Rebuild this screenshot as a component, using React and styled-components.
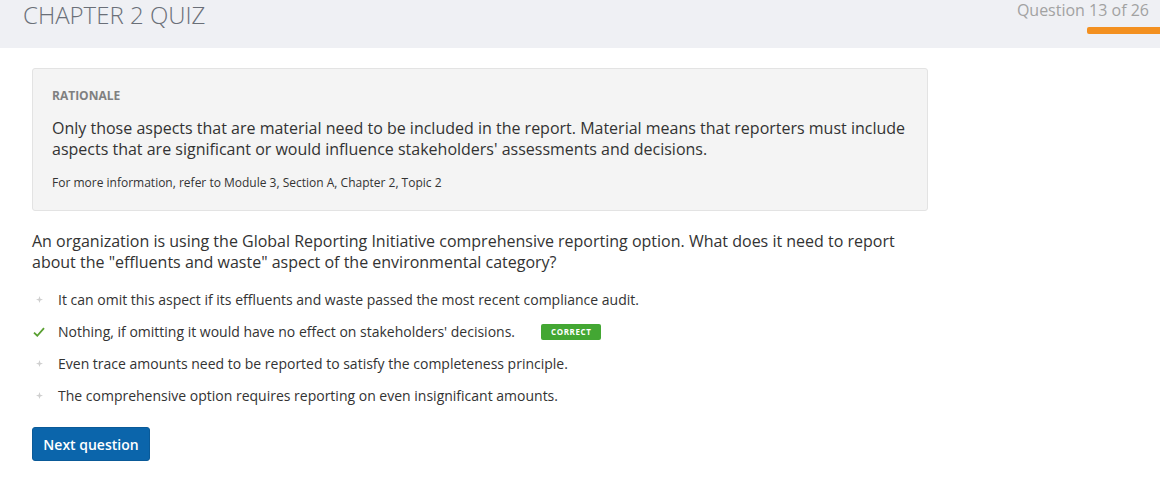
import styled, { createGlobalStyle } from "styled-components";

const GlobalStyle = createGlobalStyle`
  body {
    margin: 0;
    background: #ffffff;
    font-family: "Open Sans", "Liberation Sans", sans-serif;
    color: #333;
  }
`;

const options = [
  { text: "It can omit this aspect if its effluents and waste passed the most recent compliance audit." },
  { text: "Nothing, if omitting it would have no effect on stakeholders' decisions.", correct: true },
  { text: "Even trace amounts need to be reported to satisfy the completeness principle." },
  { text: "The comprehensive option requires reporting on even insignificant amounts." },
];

export default function App() {
  return (
    <>
      <GlobalStyle />
      <Page>
        <Header>
          <Title>CHAPTER 2 QUIZ</Title>
          <Progress>
            <ProgressText>Question 13 of 26</ProgressText>
            <ProgressBar />
          </Progress>
        </Header>

        <Content>
          <RationaleBox>
            <RationaleLabel>RATIONALE</RationaleLabel>
            <RationaleBody>
              Only those aspects that are material need to be included in the report. Material means that reporters must include
              aspects that are significant or would influence stakeholders' assessments and decisions.
            </RationaleBody>
            <RationaleRef>For more information, refer to Module 3, Section A, Chapter 2, Topic 2</RationaleRef>
          </RationaleBox>

          <QuestionText>
            An organization is using the Global Reporting Initiative comprehensive reporting option. What does it need to report
            about the "effluents and waste" aspect of the environmental category?
          </QuestionText>

          <OptionList>
            {options.map((o) => (
              <Option key={o.text}>
                <Marker>
                  {o.correct ? (
                    <svg width="12" height="10" viewBox="0 0 13 11">
                      <path d="M1 6.2 L4.6 9.6 L12 1.2" fill="none" stroke="#5aa032" strokeWidth="2" />
                    </svg>
                  ) : (
                    <svg width="7" height="7" viewBox="0 0 8 8">
                      <path d="M4 0 L5 3 L8 4 L5 5 L4 8 L3 5 L0 4 L3 3 Z" fill="#cfcfcf" />
                    </svg>
                  )}
                </Marker>
                <OptionText>{o.text}</OptionText>
                {o.correct && <Badge>CORRECT</Badge>}
              </Option>
            ))}
          </OptionList>

          <NextButton>Next question</NextButton>
        </Content>
      </Page>
    </>
  );
}

const Page = styled.div`
  width: 1160px;
  height: 479px;
  overflow: hidden;
`;

const Header = styled.div`
  height: 48px;
  background: #eff0f4;
  display: flex;
  justify-content: space-between;
  align-items: flex-start;
`;

const Title = styled.h1`
  margin: 0;
  padding: 0 0 0 23px;
  font-size: 24px;
  font-weight: 300;
  line-height: 30px;
  color: #6a6f78;
`;

const Progress = styled.div`
  display: flex;
  flex-direction: column;
  align-items: flex-end;
  padding-top: 1px;
`;

const ProgressText = styled.div`
  font-size: 16px;
  line-height: 18px;
  color: #a2a2a2;
  padding-right: 11px;
`;

const ProgressBar = styled.div`
  width: 73px;
  height: 7px;
  margin-top: 8px;
  background: #f39020;
  border-top-left-radius: 2px;
  border-bottom-left-radius: 2px;
`;

const Content = styled.div`
  padding: 20px 0 0 32px;
`;

const RationaleBox = styled.div`
  width: 896px;
  box-sizing: border-box;
  background: #f4f4f4;
  border: 1px solid #e3e3e3;
  border-radius: 3px;
  padding: 19px 20px 19px 19px;
`;

const RationaleLabel = styled.div`
  font-size: 12px;
  font-weight: 700;
  color: #808080;
  line-height: 16px;
`;

const RationaleBody = styled.p`
  margin: 14px 0 0;
  font-size: 16px;
  line-height: 21px;
  color: #333;
`;

const RationaleRef = styled.p`
  margin: 15px 0 0;
  font-size: 12px;
  line-height: 16px;
  color: #333;
`;

const QuestionText = styled.p`
  margin: 20px 0 0;
  width: 880px;
  font-size: 16px;
  line-height: 21px;
  color: #333;
`;

const OptionList = styled.ul`
  list-style: none;
  margin: 17px 0 0;
  padding: 0;
  display: flex;
  flex-direction: column;
  gap: 13px;
`;

const Option = styled.li`
  display: flex;
  align-items: center;
  height: 19px;
`;

const Marker = styled.span`
  width: 26px;
  display: flex;
  justify-content: center;
  margin-left: -6px;
  margin-right: 6px;
`;

const OptionText = styled.span`
  font-size: 14px;
  color: #333;
`;

const Badge = styled.span`
  margin-left: 26px;
  background: #43a733;
  color: #fff;
  font-size: 8px;
  font-weight: 700;
  letter-spacing: 0.6px;
  height: 16px;
  line-height: 16px;
  padding: 0 10px;
  border-radius: 2px;
`;

const NextButton = styled.button`
  margin-top: 22px;
  height: 34px;
  width: 118px;
  background: #0b65ab;
  border: 1px solid #0a5a98;
  border-radius: 3px;
  color: #fff;
  font-family: "Open Sans", "Liberation Sans", sans-serif;
  font-size: 14px;
  font-weight: 600;
  padding: 0;
`;
